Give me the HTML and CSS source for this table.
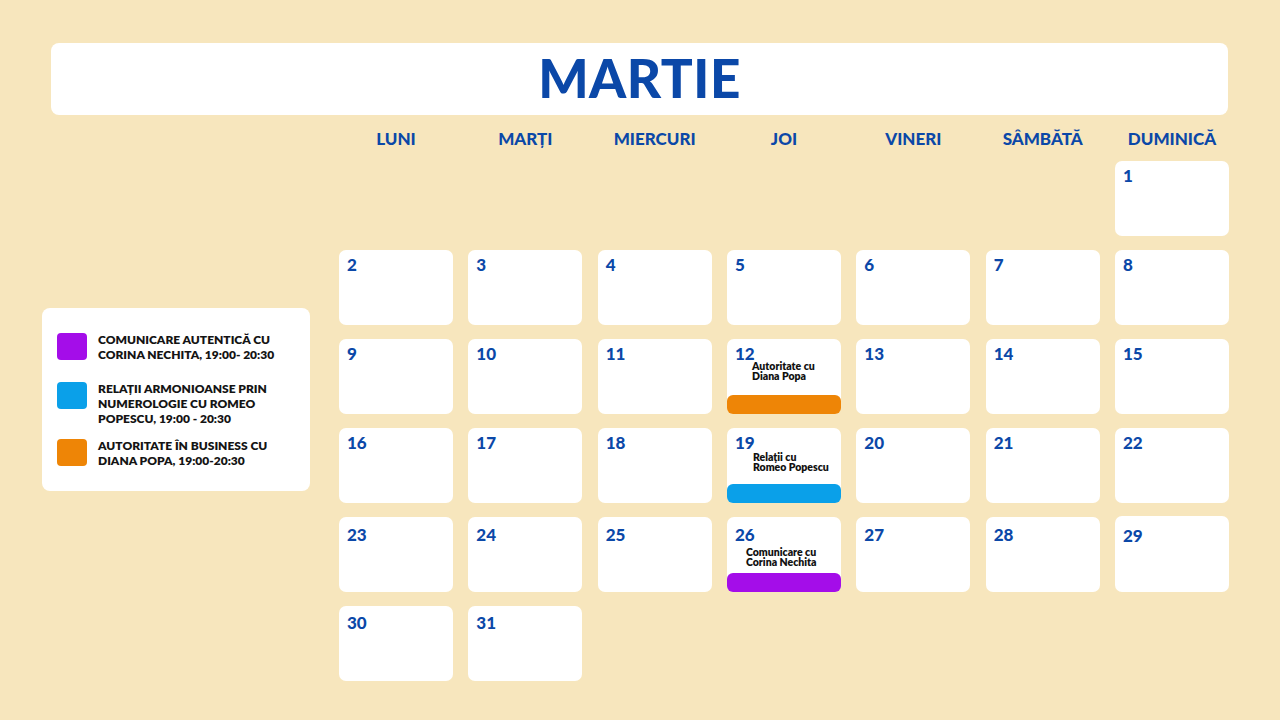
FILE: index.html
```html
<!DOCTYPE html>
<html lang="ro">
<head>
<meta charset="utf-8">
<title>Martie</title>
<link rel="stylesheet" href="styles.css">
</head>
<body>
<header class="title-bar"><h1 class="title">MARTIE</h1></header>
<main class="main">
  <aside class="legend">
    <div class="legend-item li-1">
      <span class="swatch purple"></span>
      <span class="legend-text">COMUNICARE AUTENTICĂ CU<br>CORINA NECHITA, 19:00- 20:30</span>
    </div>
    <div class="legend-item li-2">
      <span class="swatch blue"></span>
      <span class="legend-text">RELAȚII ARMONIOANSE PRIN<br>NUMEROLOGIE CU ROMEO<br>POPESCU, 19:00 - 20:30</span>
    </div>
    <div class="legend-item">
      <span class="swatch orange"></span>
      <span class="legend-text">AUTORITATE ÎN BUSINESS CU<br>DIANA POPA, 19:00-20:30</span>
    </div>
  </aside>
  <section class="calendar">
    <div class="weekdays">
      <div class="wd">LUNI</div>
      <div class="wd">MARȚI</div>
      <div class="wd">MIERCURI</div>
      <div class="wd">JOI</div>
      <div class="wd">VINERI</div>
      <div class="wd">SÂMBĂTĂ</div>
      <div class="wd">DUMINICĂ</div>
    </div>
    <div class="grid">
      <div class="empty"></div><div class="empty"></div><div class="empty"></div><div class="empty"></div><div class="empty"></div><div class="empty"></div>
      <div class="cell"><span class="num">1</span></div>
      <div class="cell"><span class="num">2</span></div>
      <div class="cell"><span class="num">3</span></div>
      <div class="cell"><span class="num">4</span></div>
      <div class="cell"><span class="num">5</span></div>
      <div class="cell"><span class="num">6</span></div>
      <div class="cell"><span class="num">7</span></div>
      <div class="cell"><span class="num">8</span></div>
      <div class="cell"><span class="num">9</span></div>
      <div class="cell"><span class="num">10</span></div>
      <div class="cell"><span class="num">11</span></div>
      <div class="cell event">
        <span class="num">12</span>
        <span class="ev-text ev-12">Autoritate cu<br>Diana Popa</span>
        <span class="bar orange"></span>
      </div>
      <div class="cell"><span class="num">13</span></div>
      <div class="cell"><span class="num">14</span></div>
      <div class="cell"><span class="num">15</span></div>
      <div class="cell"><span class="num">16</span></div>
      <div class="cell"><span class="num">17</span></div>
      <div class="cell"><span class="num">18</span></div>
      <div class="cell event">
        <span class="num">19</span>
        <span class="ev-text ev-19">Relații cu<br>Romeo Popescu</span>
        <span class="bar blue"></span>
      </div>
      <div class="cell"><span class="num">20</span></div>
      <div class="cell"><span class="num">21</span></div>
      <div class="cell"><span class="num">22</span></div>
      <div class="cell low"><span class="num">23</span></div>
      <div class="cell low"><span class="num">24</span></div>
      <div class="cell low"><span class="num">25</span></div>
      <div class="cell event low">
        <span class="num">26</span>
        <span class="ev-text ev-26">Comunicare cu<br>Corina Nechita</span>
        <span class="bar purple"></span>
      </div>
      <div class="cell low"><span class="num">27</span></div>
      <div class="cell low"><span class="num">28</span></div>
      <div class="cell low up"><span class="num">29</span></div>
      <div class="cell low2"><span class="num">30</span></div>
      <div class="cell low2"><span class="num">31</span></div>
    </div>
  </section>
</main>
</body>
</html>
```

FILE: styles.css
```css
* { box-sizing: border-box; }
html, body { margin: 0; padding: 0; }
body {
  width: 1280px;
  height: 720px;
  overflow: hidden;
  background: #f7e6bd;
  font-family: "Lato", "Liberation Sans", sans-serif;
}
.title-bar {
  margin: 43px 52px 0 51px;
  height: 72px;
  background: #ffffff;
  border-radius: 8px;
  display: flex;
  align-items: center;
  justify-content: center;
}
.title {
  margin: 0;
  font-size: 53px;
  font-weight: 900;
  color: #0b48a8;
  line-height: 1;
  letter-spacing: 0.5px;
  padding-bottom: 4px;
}
.main {
  display: flex;
  align-items: flex-start;
}
.legend {
  margin: 193px 0 0 42px;
  width: 268px;
  background: #ffffff;
  border-radius: 8px;
  padding: 24px 10px 23px 15px;
}
.legend-item {
  display: flex;
  align-items: flex-start;
  gap: 11px;
}
.li-1 { margin-bottom: 19px; }
.li-2 { margin-bottom: 12px; }
.swatch {
  flex: 0 0 30px;
  height: 27px;
  border-radius: 4px;
  margin-top: 1px;
}
.purple { background: #a40de9; }
.blue { background: #0aa0e9; }
.orange { background: #ee8506; }
.legend-text {
  font-size: 12px;
  line-height: 15px;
  font-weight: 800;
  color: #141414;
  white-space: nowrap;
}
.calendar {
  margin-left: 29px;
  width: 890px;
}
.weekdays {
  display: grid;
  grid-template-columns: repeat(7, 114px);
  column-gap: 15.33px;
  height: 46px;
  align-items: center;
}
.wd {
  text-align: center;
  font-size: 17px;
  font-weight: 900;
  color: #0b48a8;
  padding-top: 1px;
}
.grid {
  display: grid;
  grid-template-columns: repeat(7, 114px);
  grid-auto-rows: 75px;
  column-gap: 15.33px;
  row-gap: 14px;
}
.cell {
  background: #ffffff;
  border-radius: 7px;
  padding: 5px 8px 0 8px;
  position: relative;
  display: flex;
  flex-direction: column;
}
.cell.low { padding-top: 8px; }
.cell.low2 { padding-top: 7px; }
.cell.up { margin-top: -1px; padding-top: 10px; }
.num {
  font-size: 17px;
  font-weight: 900;
  line-height: 20px;
  color: #0b48a8;
}
.ev-text {
  font-size: 10.5px;
  line-height: 10px;
  font-weight: 800;
  color: #111111;
  white-space: nowrap;
}
.ev-12 { margin: -3px 0 0 17px; }
.ev-19 { margin: -1px 0 0 18px; }
.ev-26 { margin: 2px 0 0 11px; }
.bar {
  position: absolute;
  left: 0;
  right: 0;
  bottom: 0;
  height: 19px;
  border-radius: 6px;
}
```
